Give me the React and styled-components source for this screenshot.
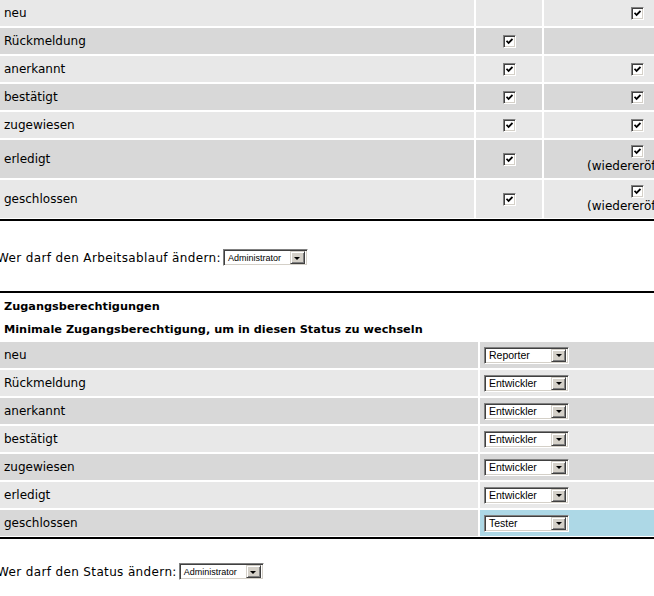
import React from 'react';
import styled, { createGlobalStyle } from 'styled-components';

const GlobalStyle = createGlobalStyle`
    html, body {
        margin: 0;
        padding: 0;
        background: #ffffff;
        overflow: hidden;
    }
    body {
        font-family: "DejaVu Sans", Verdana, sans-serif;
        font-size: 12px;
        color: #000000;
    }
`;

const tones = {
    dark: '#d8d8d8',
    light: '#e8e8e8',
    blue: '#add8e6',
    none: 'transparent',
};

const Page = styled.div`
    width: 770px;
    margin-left: -3px;
    display: flex;
    flex-direction: column;
`;

const Table = styled.div`
    display: flex;
    flex-direction: column;
    gap: 2px;
    padding: ${(p) => (p.$top ? '0' : '2px')} 0 1px 3px;
    border-bottom: 2px solid #000000;
    border-top: ${(p) => (p.$top ? 'none' : '2px solid #000000')};
`;

const Row = styled.div`
    display: grid;
    grid-template-columns: ${(p) => p.$cols};
    gap: 2px;
    min-height: ${(p) => p.$height || 26}px;
`;

const Cell = styled.div`
    background: ${(p) => tones[p.$tone || 'none']};
    padding: 0 4px;
    display: flex;
    flex-direction: column;
    justify-content: center;
    align-items: ${(p) => (p.$center ? 'center' : 'flex-start')};
    white-space: nowrap;
`;

const Heading = styled.div`
    font-weight: bold;
    font-size: 11.3px;
    padding: 0 4px;
    display: flex;
    align-items: center;
    height: ${(p) => p.$height}px;
`;

const Note = styled.span`
    line-height: 15px;
`;

const Box = styled.span`
    width: 13px;
    height: 13px;
    box-sizing: border-box;
    background: #ffffff;
    border-top: 1px solid #808080;
    border-left: 1px solid #808080;
    border-right: 1px solid #ffffff;
    border-bottom: 1px solid #ffffff;
    box-shadow: inset 1px 1px 0 #404040, inset -1px -1px 0 #d4d0c8;
    display: flex;
    align-items: center;
    justify-content: center;
    margin: 1px 0;
`;

const Check = () => (
    <Box>
        <svg width="7" height="7" viewBox="0 0 7 7">
            <path d="M0.5 2.8 L2.6 5 L6.5 1" fill="none" stroke="#000" strokeWidth="1.8" />
        </svg>
    </Box>
);

const Line = styled.div`
    display: flex;
    align-items: center;
    gap: 2px;
    height: 17px;
    font-size: 12px;
    letter-spacing: 0.36px;
    margin: ${(p) => p.$margin};
`;

const Select = styled.div`
    width: ${(p) => p.$width}px;
    height: 17px;
    box-sizing: border-box;
    background: #ffffff;
    border-top: 1px solid #808080;
    border-left: 1px solid #808080;
    border-right: 1px solid #ffffff;
    border-bottom: 1px solid #ffffff;
    box-shadow: inset 1px 1px 0 #404040, inset -1px -1px 0 #d4d0c8;
    display: flex;
    align-items: center;
    padding: 2px;
    font-family: "Liberation Sans", Arial, sans-serif;
    font-size: ${(p) => p.$size}px;
    letter-spacing: 0;
`;

const SelectText = styled.span`
    flex: 1;
    padding-left: 2px;
    overflow: hidden;
`;

const DropButton = styled.span`
    width: 15px;
    height: 13px;
    box-sizing: border-box;
    background: #d4d0c8;
    border-top: 1px solid #d4d0c8;
    border-left: 1px solid #d4d0c8;
    border-right: 1px solid #404040;
    border-bottom: 1px solid #404040;
    box-shadow: inset 1px 1px 0 #ffffff, inset -1px -1px 0 #808080;
    display: flex;
    align-items: center;
    justify-content: center;

    &::after {
        content: '';
        border-left: 3px solid transparent;
        border-right: 3px solid transparent;
        border-top: 3px solid #000000;
        margin-top: 1px;
    }
`;

const Dropdown = ({ value, width = 85, size = 11 }) => (
    <Select $width={width} $size={size}>
        <SelectText>{value}</SelectText>
        <DropButton />
    </Select>
);

const workflow = [
    { name: 'neu', a: false, b: true },
    { name: 'Rückmeldung', a: true, b: false },
    { name: 'anerkannt', a: true, b: true },
    { name: 'bestätigt', a: true, b: true },
    { name: 'zugewiesen', a: true, b: true },
    { name: 'erledigt', a: true, b: true, reopen: true },
    { name: 'geschlossen', a: true, b: true, reopen: true },
];

const access = [
    ['neu', 'Reporter'],
    ['Rückmeldung', 'Entwickler'],
    ['anerkannt', 'Entwickler'],
    ['bestätigt', 'Entwickler'],
    ['zugewiesen', 'Entwickler'],
    ['erledigt', 'Entwickler'],
    ['geschlossen', 'Tester'],
];

export default function App() {
    return (
        <Page>
            <GlobalStyle />
            <Table $top>
                {workflow.map((row, i) => {
                    const tone = i % 2 === 0 ? 'light' : 'dark';
                    return (
                        <Row key={row.name} $cols="474px 66px 186px" $height={row.reopen ? 38 : 26}>
                            <Cell $tone={tone}>{row.name}</Cell>
                            <Cell $tone={tone} $center>
                                {row.a && <Check />}
                            </Cell>
                            <Cell $tone={tone} $center>
                                {row.b && <Check />}
                                {row.reopen && <Note>(wiedereröffnen)</Note>}
                            </Cell>
                        </Row>
                    );
                })}
            </Table>

            <Line $margin="28px 0 25px 0">
                Wer darf den Arbeitsablauf ändern:
                <Dropdown value="Administrator" size={9} />
            </Line>

            <Table>
                <Heading $height={22}>Zugangsberechtigungen</Heading>
                <Heading $height={21}>
                    Minimale Zugangsberechtigung, um in diesen Status zu wechseln
                </Heading>
                {access.map(([name, level], i) => {
                    const tone = i % 2 === 0 ? 'dark' : 'light';
                    const last = i === access.length - 1;
                    return (
                        <Row key={name} $cols="478px 250px">
                            <Cell $tone={tone}>{name}</Cell>
                            <Cell $tone={last ? 'blue' : tone}>
                                <Dropdown value={level} size={10.5} />
                            </Cell>
                        </Row>
                    );
                })}
            </Table>

            <Line $margin="24px 0 0 0">
                Wer darf den Status ändern:
                <Dropdown value="Administrator" size={9} />
            </Line>
        </Page>
    );
}
